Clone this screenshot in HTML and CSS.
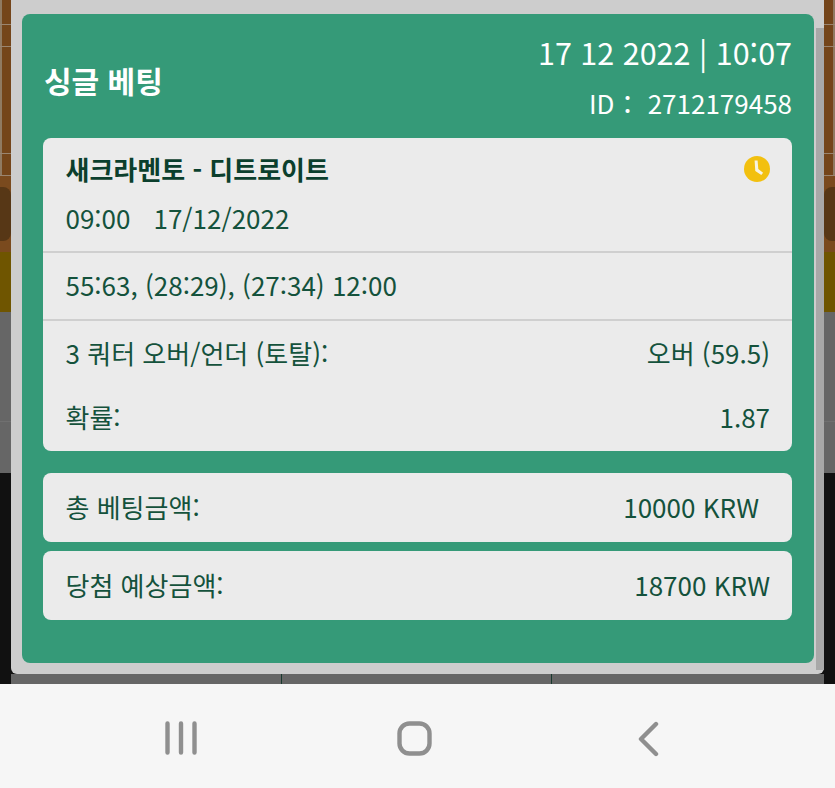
FILE: index.html
```html
<!DOCTYPE html>
<html lang="ko">
<head>
<meta charset="utf-8">
<title>싱글 베팅</title>
<link rel="stylesheet" href="styles.css">
</head>
<body>
<div class="screen">
  <div class="backdrop">
    <div class="band band-planks"></div>
    <div class="band band-wood"><span class="blob blob-left"></span><span class="blob blob-right"></span></div>
    <div class="band band-olive"></div>
    <div class="band band-grey"></div>
    <div class="band band-black">
      <div class="foot"><span class="foot-cell"></span><span class="foot-cell"></span><span class="foot-cell"></span></div>
    </div>
  </div>
  <div class="dialog">
    <div class="ticket">
      <header class="ticket-head">
        <h1 class="ticket-title">싱글 베팅</h1>
        <div class="ticket-meta">
          <div class="ticket-date">17 12 2022 | 10:07</div>
          <div class="ticket-id">ID： 2712179458</div>
        </div>
      </header>
      <section class="panel">
        <div class="event">
          <div class="event-top">
            <div class="event-name">새크라멘토 - 디트로이트</div>
            <svg class="clock" viewBox="0 0 26 26" aria-hidden="true"><circle cx="13" cy="13" r="13" fill="#f2c00f"/><path d="M10.6 4.5h3l.7 8.5 4.8 3.7-1.8 2.3-6-3.9z" fill="#f7f3e2"/></svg>
          </div>
          <div class="event-time"><span>09:00</span><span>17/12/2022</span></div>
        </div>
        <div class="score">55:63, (28:29), (27:34) 12:00</div>
        <div class="market">
          <div class="line line-first"><span>3 쿼터 오버/언더 (토탈):</span><span>오버 (59.5)</span></div>
          <div class="line line-second"><span>확률:</span><span>1.87</span></div>
        </div>
      </section>
      <div class="panel sum sum-stake"><span>총 베팅금액:</span><span class="sum-inset">10000 KRW</span></div>
      <div class="panel sum sum-win"><span>당첨 예상금액:</span><span>18700 KRW</span></div>
    </div>
  </div>
</div>
<nav class="navbar">
  <svg class="nav-icon" width="32" height="34" viewBox="0 0 32 34" aria-hidden="true"><path d="M2.5 2.5v29M16 2.5v29M29.5 2.5v29" fill="none" stroke="#8f8f8f" stroke-width="4.4" stroke-linecap="round"/></svg>
  <svg class="nav-icon" width="36" height="36" viewBox="0 0 36 36" aria-hidden="true"><rect x="2.5" y="2.5" width="30" height="30" rx="10" fill="none" stroke="#8f8f8f" stroke-width="4.4"/></svg>
  <svg class="nav-icon" width="22" height="36" viewBox="0 0 22 36" aria-hidden="true"><path d="M19 3 4 18l15 15" fill="none" stroke="#8f8f8f" stroke-width="4.4" stroke-linecap="round" stroke-linejoin="round"/></svg>
</nav>
</body>
</html>
```
FILE: styles.css
```css
* { box-sizing: border-box; }
html, body { margin: 0; padding: 0; }
body {
  width: 835px;
  height: 788px;
  overflow: hidden;
  background: #f6f6f6;
  font-family: "Noto Sans CJK KR", "Noto Sans", sans-serif;
}
.screen { position: relative; height: 684px; }
.backdrop { display: flex; flex-direction: column; height: 100%; }
.band { flex: none; }
.band-planks {
  height: 176px;
  background-color: #74451a;
  background-image:
    linear-gradient(#9a8570, #9a8570), linear-gradient(#9a8570, #9a8570),
    linear-gradient(#9a8570, #9a8570), linear-gradient(#9a8570, #9a8570),
    linear-gradient(#8f7a62, #8f7a62), linear-gradient(#8f7a62, #8f7a62);
  background-repeat: no-repeat;
  background-size: 100% 1px, 100% 1px, 100% 1px, 100% 1px, 2px 100%, 2px 100%;
  background-position: 0 24px, 0 46px, 0 153px, 0 175px, 0 0, 100% 0;
}
.band-wood {
  height: 76px;
  background: #7a4a1e;
  display: flex;
  justify-content: space-between;
  padding-top: 11px;
}
.blob { display: block; width: 11px; height: 54px; background: #573716; }
.blob-left { border-radius: 0 8px 8px 0; }
.blob-right { border-radius: 8px 0 0 8px; }
.band-olive { height: 60px; background: #6f5500; }
.band-grey {
  height: 161px;
  background-color: #666;
  background-image: linear-gradient(#707070, #707070);
  background-repeat: no-repeat;
  background-size: 100% 1px;
  background-position: 0 109px;
}
.band-black {
  height: 211px;
  background: #111;
  display: flex;
  flex-direction: column;
  justify-content: flex-end;
  padding: 0 11px;
}
.foot {
  height: 10px;
  background: #666;
  display: grid;
  grid-template-columns: 270px 270px 1fr;
}
.foot-cell + .foot-cell { border-left: 1px solid #18392e; }

.dialog {
  position: absolute;
  left: 11px;
  top: 0;
  width: 813px;
  height: 674px;
  background: #cdcdcd;
  border-radius: 0 0 6px 6px;
  padding: 14px 0 0 11px;
}
.dialog::after {
  content: "";
  position: absolute;
  right: 0;
  top: 28px;
  bottom: 4px;
  width: 8px;
  background: #a8a8a8;
}
.ticket {
  width: 792px;
  height: 649px;
  background: #359a78;
  border-radius: 8px;
  padding: 0 22px 0 21px;
  display: flex;
  flex-direction: column;
}
.ticket-head {
  height: 124px;
  display: flex;
  justify-content: space-between;
  align-items: flex-start;
  color: #fff;
}
.ticket-title {
  margin: 47px 0 0 1px;
  font-size: 30px;
  line-height: 38px;
  font-weight: 700;
}
.ticket-meta { text-align: right; padding-top: 18px; }
.ticket-date { font-size: 30.5px; line-height: 40px; }
.ticket-id { font-size: 26px; line-height: 34px; margin-top: 14px; }

.panel {
  background: #ebebeb;
  border-radius: 8px;
  color: #14523c;
  font-size: 26px;
}
.event { height: 115px; padding: 13px 22px 0 22.5px; border-bottom: 2px solid #cfcfcf; }
.event-top { display: flex; justify-content: space-between; align-items: flex-start; }
.event-name { font-size: 26px; line-height: 36px; font-weight: 700; color: #0b3f2d; }
.clock { width: 26px; height: 26px; margin-top: 5px; display: block; }
.event-time { display: flex; gap: 23px; line-height: 36px; margin-top: 13px; }
.score { height: 68px; padding: 0 22.5px; line-height: 63px; border-bottom: 2px solid #cfcfcf; }
.market { padding: 0 22px 0 22.5px; height: 130px; }
.line { display: flex; justify-content: space-between; line-height: 36px; }
.line-first { padding-top: 14px; }
.line-second { padding-top: 28px; }

.sum {
  display: flex;
  justify-content: space-between;
  align-items: center;
  height: 69px;
  padding: 0 22px 2px 22.5px;
}
.sum-stake { margin-top: 22px; }
.sum-win { margin-top: 9px; }
.sum-inset { margin-right: 11px; }

.navbar {
  height: 104px;
  background: #f6f6f6;
  display: grid;
  grid-template-columns: 232px 240px 1fr;
  padding: 37px 0 0 165px;
  align-items: start;
}
.nav-icon { display: block; }
```
